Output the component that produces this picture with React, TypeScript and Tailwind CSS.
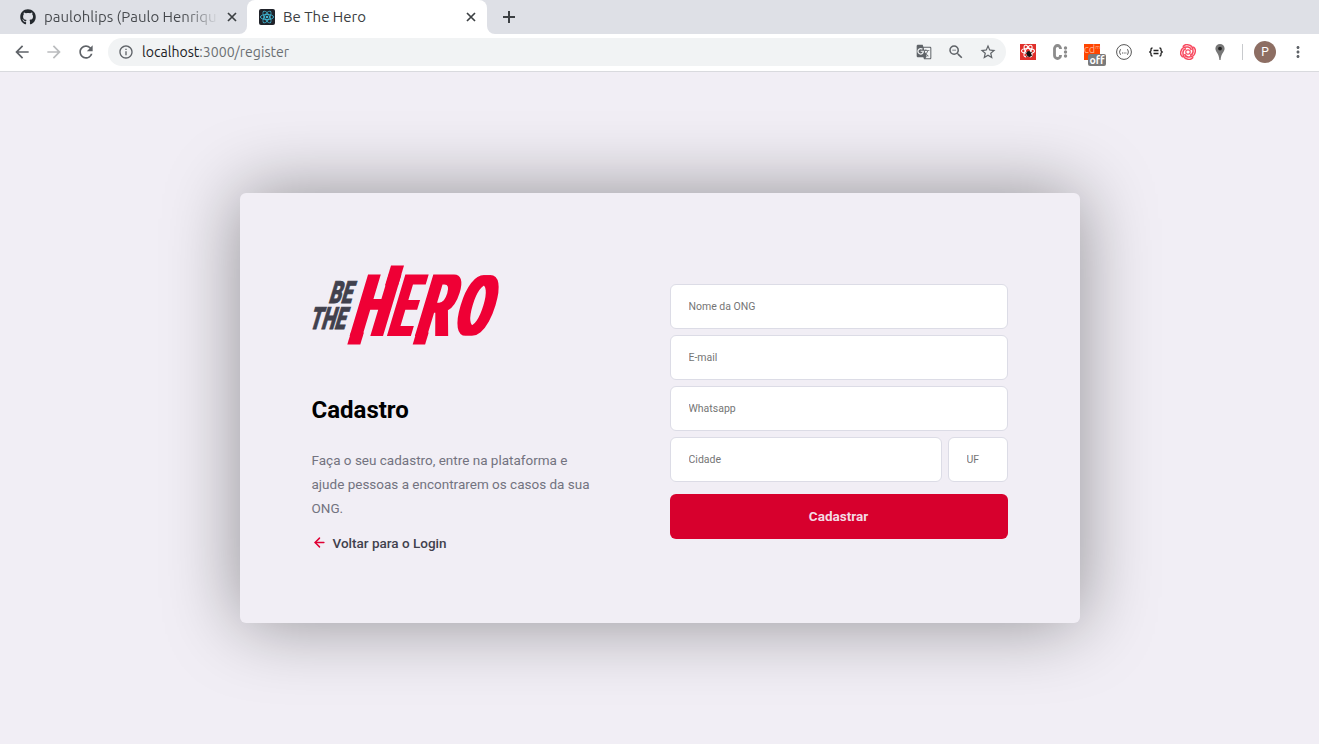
import type { ReactNode } from "react";
import { FiArrowLeft } from "react-icons/fi";
import {
  MdArrowBack,
  MdArrowForward,
  MdRefresh,
  MdInfoOutline,
  MdGTranslate,
  MdZoomOut,
  MdStarBorder,
  MdMoreVert,
} from "react-icons/md";
import { FaGithub } from "react-icons/fa";

function ReactMark({ color, className }: { color: string; className: string }) {
  return (
    <svg viewBox="-8 -8 16 16" className={className} fill="none" stroke={color}>
      <circle r="1.3" fill={color} stroke="none" />
      <ellipse rx="6.6" ry="2.6" strokeWidth="0.9" />
      <ellipse rx="6.6" ry="2.6" strokeWidth="0.9" transform="rotate(60)" />
      <ellipse rx="6.6" ry="2.6" strokeWidth="0.9" transform="rotate(120)" />
    </svg>
  );
}

function CloseMark() {
  return (
    <svg viewBox="0 0 10 10" className="ml-2 size-2.5 shrink-0" fill="none" stroke="#3c4043" strokeWidth="1.7">
      <path d="M1 1l8 8M9 1l-8 8" />
    </svg>
  );
}

function TabStrip() {
  return (
    <div className="flex h-[34px] bg-white text-[#3c4043]">
      <div className="flex h-full w-[247px] items-center rounded-br-lg bg-[#dee0e6] pl-5">
        <FaGithub className="size-4 shrink-0 text-[#24292e]" />
        <div className="ml-2 w-[175px] bg-linear-to-r from-[#45484c] from-80% to-transparent bg-clip-text text-[15px] whitespace-nowrap text-transparent">
          paulohlips (Paulo Henriqu
        </div>
        <CloseMark />
      </div>
      <div className="h-full w-[240px] bg-linear-to-b from-[#dee0e6] from-50% to-white to-50%">
        <div className="flex h-full items-center rounded-t-lg bg-white pl-3">
          <span className="flex size-4 items-center justify-center rounded-[2px] bg-[#20232a]">
            <ReactMark color="#41b9d6" className="size-4" />
          </span>
          <span className="ml-2 w-[175px] text-[15px]">Be The Hero</span>
          <CloseMark />
        </div>
      </div>
      <div className="flex flex-1 items-center bg-white">
        <div className="flex h-full flex-1 items-center rounded-bl-lg bg-[#dee0e6] pl-4">
          <svg viewBox="0 0 12 12" className="size-3" fill="none" stroke="#3c4043" strokeWidth="2">
            <path d="M6 0v12M0 6h12" />
          </svg>
        </div>
      </div>
    </div>
  );
}

function Slot({ children }: { children: ReactNode }) {
  return <span className="relative flex size-8 shrink-0 items-center justify-center">{children}</span>;
}

function Toolbar() {
  return (
    <div className="flex h-[38px] items-center border-b border-[#d9dade] bg-white pb-px pl-1.5 text-[#5f6368]">
      <Slot>
        <MdArrowBack className="size-5" />
      </Slot>
      <Slot>
        <MdArrowForward className="size-5 text-[#babcbe]" />
      </Slot>
      <Slot>
        <MdRefresh className="size-5" />
      </Slot>
      <div className="ml-1.5 flex h-7 w-[898px] items-center rounded-full bg-[#f1f3f4] pl-2.5">
        <MdInfoOutline className="size-4" />
        <div className="ml-2 flex-1 text-[14.1px] leading-5 text-[#6b6f73]">
          <span className="text-[#202124]">localhost</span>:3000/register
        </div>
        <Slot>
          <MdGTranslate className="size-4" />
        </Slot>
        <Slot>
          <MdZoomOut className="size-[18px]" />
        </Slot>
        <Slot>
          <MdStarBorder className="size-[18px]" />
        </Slot>
        <span className="w-0.5" />
      </div>
      <span className="w-1.5" />
      <Slot>
        <svg viewBox="0 0 16 16" className="size-4" fill="none" stroke="#fff" strokeWidth="1.1">
          <rect width="16" height="16" fill="#e0302b" stroke="none" />
          <ellipse cx="8" cy="7" rx="6.5" ry="2.5" />
          <ellipse cx="8" cy="7" rx="6.5" ry="2.5" transform="rotate(60 8 7)" />
          <ellipse cx="8" cy="7" rx="6.5" ry="2.5" transform="rotate(120 8 7)" />
          <ellipse cx="9" cy="10" rx="2.3" ry="2.9" fill="#111" stroke="none" transform="rotate(-20 9 10)" />
          <path d="M5.500 9l7 3M6 13l6-5" stroke="#111" strokeWidth="0.8" />
        </svg>
      </Slot>
      <Slot>
        <svg viewBox="0 0 16 16" className="size-4" fill="#8c8c8c">
          <path d="M8.500 5V4.500a3 3 0 0 0-6 0v7a3 3 0 0 0 6 0V11" fill="none" stroke="#8c8c8c" strokeWidth="2.800" />
          <circle cx="13.500" cy="4" r="1.700" />
          <circle cx="13.500" cy="8" r="1.700" />
          <circle cx="13.500" cy="12" r="1.700" />
        </svg>
      </Slot>
      <Slot>
        <span className="flex size-4 items-start justify-center bg-[#ff4500] text-[11px] leading-[11px] text-[#ffb18f]">
          cd<span className="text-[6px] leading-[6px]">m</span>
        </span>
        <span className="absolute top-[18px] left-3 flex h-3 w-[18px] items-center justify-center rounded-[2px] bg-[#7b7b7b] text-[10.5px] leading-3 font-bold text-white">
          off
        </span>
      </Slot>
      <Slot>
        <svg viewBox="0 0 16 16" className="size-4" fill="none" stroke="#555" strokeWidth="1">
          <circle cx="8" cy="8" r="7.400" />
          <path d="M5 5.500q-1 0-1 1v.7l-.8.8.8.8v.7q0 1 1 1M11 5.500q1 0 1 1v.7l.8.8-.8.8v.7q0 1-1 1" />
          <path d="M6 9h4.500" strokeDasharray="1 .7" />
        </svg>
      </Slot>
      <Slot>
        <svg viewBox="0 0 16 16" className="size-4" fill="none" stroke="#222" strokeWidth="1.300">
          <path d="M4.500 4q-1.500 0-1.500 1.300v1.500L1.800 8 3 9.200v1.500Q3 12 4.500 12M11.500 4q1.500 0 1.500 1.300v1.500L14.200 8 13 9.200v1.500q0 1.300-1.500 1.300" />
          <path d="M5.500 6.500h5M5.500 9.500h5" strokeWidth="1.400" />
        </svg>
      </Slot>
      <Slot>
        <svg viewBox="-8 -8 16 16" className="size-4" fill="none" stroke="#f8485e" strokeWidth="1.500">
          {[0, 90, 180, 270].map((a) => (
            <path key={a} d="M-5.200-5.200Q-2.500-8.200 0-7.200Q5.500-6.500 5 0Q4.500 2.800 2 3.300" transform={`rotate(${a})`} />
          ))}
          <circle r="2.200" strokeWidth="1.200" />
        </svg>
      </Slot>
      <Slot>
        <svg viewBox="0 0 16 16" className="size-4">
          <path d="M8 0a4.600 4.600 0 0 1 4.600 4.600C12.600 8 9 9.500 8.600 16H7.400C7 9.500 3.400 8 3.400 4.600A4.600 4.600 0 0 1 8 0" fill="#777" />
          <circle cx="8" cy="4.600" r="1.900" fill="#222" />
        </svg>
      </Slot>
      <span className="ml-1.5 h-4 w-px bg-[#c8cacd]" />
      <span className="ml-[11px] flex size-[22px] items-center justify-center rounded-full bg-[#8d6e63] font-['Roboto',sans-serif] text-[12px] text-white">
        P
      </span>
      <span className="w-[5px]" />
      <Slot>
        <MdMoreVert className="ml-px size-[18px]" />
      </Slot>
    </div>
  );
}

type Glyph = { char: string; x: number; y: number; sx: number; sy: number };

const heroGlyphs: Glyph[] = [
  { char: "H", x: 37.5, y: 0, sx: 0.466, sy: 0.894 },
  { char: "E", x: 75.7, y: 0, sx: 0.32, sy: 0.894 },
  { char: "R", x: 103, y: 0, sx: 0.43, sy: 0.894 },
  { char: "O", x: 140.6, y: -1, sx: 0.415, sy: 0.86 },
];

function Logo() {
  return (
    <svg viewBox="0 0 188 81" className="block h-[81px] w-[188px] overflow-visible" role="img">
      <defs>
        <filter id="widen" x="-20" y="-10" width="230" height="110" filterUnits="userSpaceOnUse">
          <feMorphology operator="dilate" radius="3 0" />
        </filter>
      </defs>
      <g filter="url(#widen)">
        <g fill="#ef0035" transform="translate(0 70.5) skewX(-16.7)" className="font-['Liberation_Sans',sans-serif] font-bold">
          {heroGlyphs.map((g) => (
            <text key={g.char} transform={`translate(${g.x} ${g.y}) scale(${g.sx} ${g.sy})`} fontSize="100">
              {g.char}
            </text>
          ))}
        </g>
      </g>
      <g fill="#ef0035" transform="translate(0 70.5) skewX(-16.7)">
        <rect x="58" y="-70" width="13" height="20" />
        <rect x="38" y="-3" width="13" height="12" />
        <rect x="103.400" y="-3" width="12.400" height="12" />
      </g>
      <g fill="#41414d" stroke="#41414d" strokeWidth="0.9" className="font-['Roboto',sans-serif] font-black">
        <g transform="translate(0 38) skewX(-16.7)">
          <text fontSize="30.500" textLength="23" lengthAdjust="spacingAndGlyphs" x="16" y="0">
            BE
          </text>
        </g>
        <g transform="translate(0 64) skewX(-16.7)">
          <text fontSize="30.500" textLength="36" lengthAdjust="spacingAndGlyphs" x="-3.500" y="0">
            THE
          </text>
        </g>
      </g>
    </svg>
  );
}

function Field({ label, className }: { label: string; className: string }) {
  return (
    <input
      placeholder={label}
      className={`h-[45px] rounded-md border border-[#dcdce6] bg-white px-[18px] text-[10.5px] text-[#333] outline-none placeholder:text-[#757575] ${className}`}
    />
  );
}

export default function App() {
  return (
    <div className="flex h-[744px] w-[1319px] flex-col overflow-hidden bg-[#f1eef5] font-['Ubuntu','Noto_Sans',sans-serif]">
      <TabStrip />
      <Toolbar />
      <main className="flex flex-1 justify-center pt-[121px] font-['Roboto',sans-serif]">
        <div className="flex h-[430px] w-[840px] items-start justify-between rounded-md bg-[#f1eef5] p-[72px] shadow-[0_0_75px_rgba(0,0,0,0.4)]">
          <section className="w-[285px]">
            <Logo />
            <h1 className="mt-12 mb-[22px] text-[24px] leading-8 font-bold text-black">Cadastro</h1>
            <p className="text-[13.5px] leading-6 text-[#737380]">
              Faça o seu cadastro, entre na plataforma e ajude pessoas a encontrarem os casos da sua ONG.
            </p>
            <a className="mt-[13px] flex items-center text-[13.5px] font-medium text-[#41414d]" href="#login">
              <FiArrowLeft strokeWidth={2.3} className="mr-1.5 mb-px size-[15px] text-[#e00034]" />
              Voltar para o Login
            </a>
          </section>
          <form className="mt-[19px] flex w-[338px] flex-col gap-1.5">
            <Field label="Nome da ONG" className="w-full" />
            <Field label="E-mail" className="w-full" />
            <Field label="Whatsapp" className="w-full" />
            <div className="flex gap-1.5">
              <Field label="Cidade" className="w-[272px]" />
              <Field label="UF" className="w-[60px]" />
            </div>
            <button type="button" className="mt-1.5 h-[45px] rounded-md bg-[#d7002d] text-[13.5px] font-bold text-[#f3dbe3]">
              Cadastrar
            </button>
          </form>
        </div>
      </main>
    </div>
  );
}
